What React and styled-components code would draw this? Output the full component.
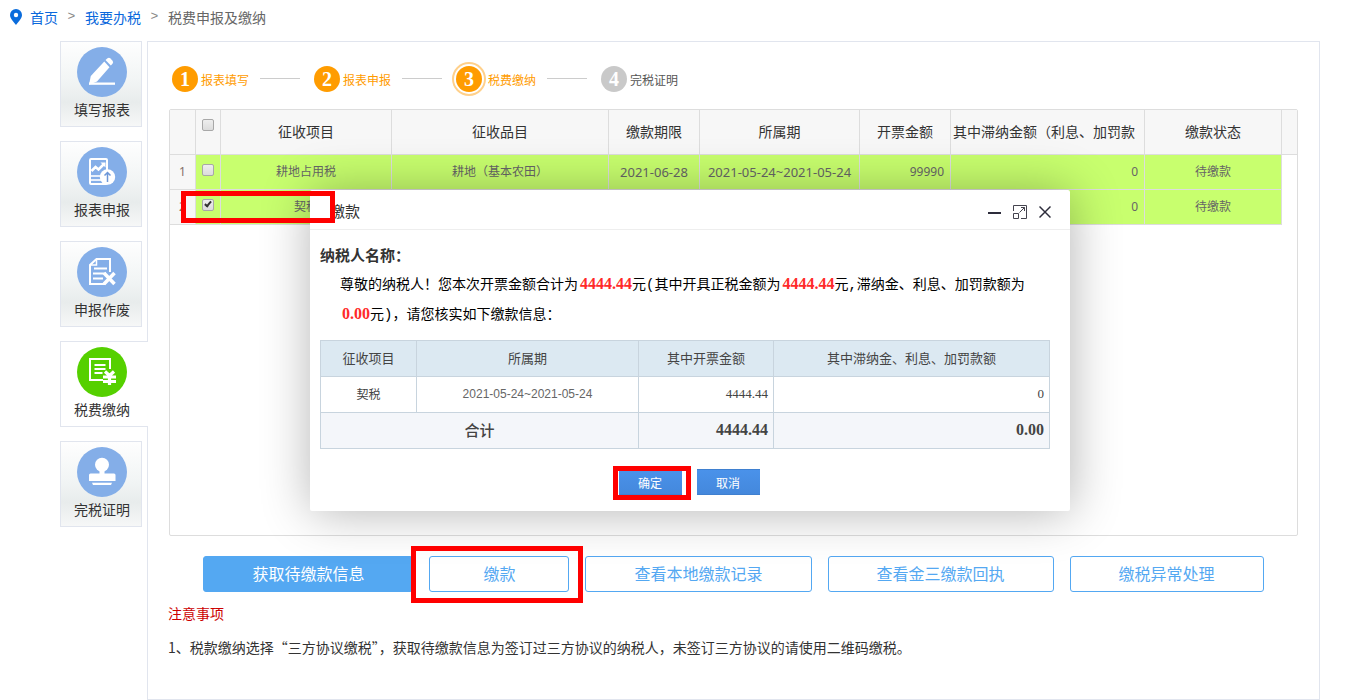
import React, { useState } from 'react';
import styled, { createGlobalStyle, css } from 'styled-components';

const GlobalStyle = createGlobalStyle`
  * {
    box-sizing: border-box;
  }

  body {
    margin: 0;
    background: #fff;
    color: #333;
    font-family: "Noto Sans CJK SC", sans-serif;
    font-size: 14px;
  }

  button, input {
    font-family: inherit;
  }
`;

const navItems = [
  { label: '填写报表', icon: 'edit' },
  { label: '报表申报', icon: 'report' },
  { label: '申报作废', icon: 'cancel' },
  { label: '税费缴纳', icon: 'pay', active: true },
  { label: '完税证明', icon: 'stamp' },
];

const steps = [
  { label: '报表填写', done: true },
  { label: '报表申报', done: true },
  { label: '税费缴纳', done: true, current: true },
  { label: '完税证明' },
];

const initialRows = [
  {
    item: '耕地占用税',
    category: '耕地（基本农田）',
    deadline: '2021-06-28',
    period: '2021-05-24~2021-05-24',
    amount: '99990',
    late: '0',
    status: '待缴款',
    checked: false,
  },
  {
    item: '契税',
    category: '',
    deadline: '',
    period: '',
    amount: '',
    late: '0',
    status: '待缴款',
    checked: true,
  },
];

const NavIcon = ({ name }) => (
  <svg width="50" height="50" viewBox="0 0 50 50" fill="none" aria-hidden="true">
    <circle cx="25" cy="25" r="25" fill={name === 'pay' ? '#55d000' : '#84aee8'} />
    {name === 'edit' && (
      <g fill="#fff">
        <path d="M28.500 13l2-1.800q1.500-1.200 3 .3l2 2.200q1.300 1.500 0 3l-1.700 1.800z" />
        <path d="M27.300 14.500l5.200 5.700L20 34.500l-8 3.200 1.800-8.700z" />
        <path d="M12 35.500h26v2.300H12z" />
      </g>
    )}
    {name === 'report' && (
      <g>
        <rect x="13" y="12" width="17" height="25" rx="1" stroke="#fff" strokeWidth="2" />
        <path d="M14.500 24l4-4 3 2.500 5-5" stroke="#fff" strokeWidth="2.500" />
        <path d="M23.500 15.500h5v5z" fill="#fff" />
        <path d="M14 29h10M14 33h10" stroke="#fff" strokeWidth="2" opacity="0.8" />
        <circle cx="30.500" cy="30" r="7.700" fill="#fff" />
        <path d="M30.500 35v-9M27.500 28.500l3-3 3 3" stroke="#6d97d8" strokeWidth="1.500" />
      </g>
    )}
    {name === 'cancel' && (
      <g stroke="#fff" strokeWidth="2">
        <path d="M33 25V12H19.500L13 18v19h15" />
        <path d="M19.500 12v6H13" strokeWidth="1.500" />
        <path d="M17 21.500h13M16 26.500h13M16 31.500h10" />
        <path d="M27 26l10.500 11M37.500 26L27 37" strokeWidth="3.500" />
      </g>
    )}
    {name === 'pay' && (
      <g stroke="#fff" strokeWidth="2">
        <path d="M33 22V12H13v21h13" />
        <path d="M17.500 18h11M17.500 22h11M17.500 26h8" />
        <path d="M28 24.500l4.500 4 4.500-4M32.500 28v10M26 30h13M26 34.500h13" strokeWidth="3.200" />
      </g>
    )}
    {name === 'stamp' && (
      <g fill="#fff">
        <circle cx="25" cy="17.700" r="7" />
        <path d="M22.500 22h5v4.500h9.500q1.500 0 1.500 1.500v6h-26.500v-6q0-1.500 1.500-1.500h9z" />
        <path d="M15 35.700h20l-1 2.300H16z" />
      </g>
    )}
  </svg>
);

const TaxDialog = () => (
  <Dialog role="dialog" aria-labelledby="dialog-title">
    <DialogHeader>
      <DialogTitle id="dialog-title">缴款</DialogTitle>
      <WindowButton aria-label="最小化">
        <svg width="13" height="14" viewBox="0 0 13 14">
          <path d="M0 7h13v2H0z" fill="#2d2c3b" />
        </svg>
      </WindowButton>
      <WindowButton aria-label="最大化">
        <svg width="14" height="14" viewBox="0 0 14 14" fill="none" stroke="#45444f">
          <path d="M.5 6V.5h13v13H8M.5 8.500h5v5h-5zM6.500 7.500l5-5M8 2.500h3.500V6" />
        </svg>
      </WindowButton>
      <WindowButton aria-label="关闭">
        <svg width="12" height="14" viewBox="0 0 12 14" fill="none" stroke="#2d2c3b">
          <path d="M.5 1.500l11 11M11.500 1.500l-11 11" strokeWidth="1.500" />
        </svg>
      </WindowButton>
    </DialogHeader>
    <DialogBody>
      <TaxpayerName>纳税人名称：</TaxpayerName>
      <Message>
        尊敬的纳税人！您本次开票金额合计为<Amount>4444.44</Amount>元(其中开具正税金额为
        <Amount>4444.44</Amount>元,滞纳金、利息、加罚款额为
        <Amount>0.00</Amount>元)，请您核实如下缴款信息：
      </Message>
      <SummaryTable>
        <colgroup>
          <col style={{ width: 96 }} />
          <col style={{ width: 222 }} />
          <col style={{ width: 135 }} />
          <col />
        </colgroup>
        <thead>
          <tr>
            <th>征收项目</th>
            <th>所属期</th>
            <th>其中开票金额</th>
            <th>其中滞纳金、利息、加罚款额</th>
          </tr>
        </thead>
        <tbody>
          <tr>
            <td>契税</td>
            <PeriodCell>2021-05-24~2021-05-24</PeriodCell>
            <MoneyCell>4444.44</MoneyCell>
            <MoneyCell>0</MoneyCell>
          </tr>
        </tbody>
        <tfoot>
          <tr>
            <TotalLabel colSpan={2}>合计</TotalLabel>
            <MoneyCell $total>4444.44</MoneyCell>
            <MoneyCell $total>0.00</MoneyCell>
          </tr>
        </tfoot>
      </SummaryTable>
      <DialogActions>
        <Marked>
          <DialogButton>确定</DialogButton>
          <ConfirmMark />
        </Marked>
        <DialogButton>取消</DialogButton>
      </DialogActions>
    </DialogBody>
  </Dialog>
);

const App = () => {
  const [rows, setRows] = useState(initialRows);

  const toggle = (index) => {
    setRows(rows.map((row, i) => (i === index ? { ...row, checked: !row.checked } : row)));
  };

  const toggleAll = (e) => {
    setRows(rows.map((row) => ({ ...row, checked: e.target.checked })));
  };

  return (
    <Page>
      <GlobalStyle />
      <Breadcrumb>
        <svg width="12" height="16" viewBox="0 0 12 16" aria-hidden="true">
          <path
            d="M6 0a6 6 0 0 0-6 6c0 3.500 3.500 6.500 6 10 2.500-3.500 6-6.500 6-10a6 6 0 0 0-6-6z"
            fill="#0a6cdc"
          />
          <circle cx="6" cy="6" r="2.200" fill="#fff" />
        </svg>
        <CrumbLink href="#home">首页</CrumbLink>
        <Separator>&gt;</Separator>
        <CrumbLink href="#tax">我要办税</CrumbLink>
        <Separator>&gt;</Separator>
        <span>税费申报及缴纳</span>
      </Breadcrumb>

      <Main>
        <SideNav>
          {navItems.map((item) => (
            <NavItem key={item.label} href={`#${item.icon}`} $active={item.active}>
              <NavIcon name={item.icon} />
              <span>{item.label}</span>
            </NavItem>
          ))}
        </SideNav>

        <Panel>
          <Steps>
            {steps.map((step, i) => (
              <Step key={step.label} $done={step.done}>
                <StepNumber $done={step.done} $current={step.current}>{i + 1}</StepNumber>
                {step.label}
              </Step>
            ))}
          </Steps>

          <GridBox>
            <GridTable>
              <colgroup>
                <col style={{ width: 26 }} />
                <col style={{ width: 25 }} />
                <col style={{ width: 171 }} />
                <col />
                <col style={{ width: 91 }} />
                <col style={{ width: 160 }} />
                <col style={{ width: 91 }} />
                <col style={{ width: 194 }} />
                <col style={{ width: 137 }} />
                <col style={{ width: 15 }} />
              </colgroup>
              <thead>
                <tr>
                  <HeadCell />
                  <HeadCell $top>
                    <Checkbox
                      type="checkbox"
                      aria-label="全选"
                      checked={rows.every((row) => row.checked)}
                      onChange={toggleAll}
                    />
                  </HeadCell>
                  <HeadCell>征收项目</HeadCell>
                  <HeadCell>征收品目</HeadCell>
                  <HeadCell>缴款期限</HeadCell>
                  <HeadCell>所属期</HeadCell>
                  <HeadCell>开票金额</HeadCell>
                  <HeadCell $clip>其中滞纳金额（利息、加罚款</HeadCell>
                  <HeadCell>缴款状态</HeadCell>
                  <HeadCell $last />
                </tr>
              </thead>
              <tbody>
                {rows.map((row, i) => (
                  <tr key={row.item}>
                    <IndexCell>{i + 1}</IndexCell>
                    <Cell $top>
                      <Checkbox
                        type="checkbox"
                        aria-label={row.item}
                        checked={row.checked}
                        onChange={() => toggle(i)}
                      />
                    </Cell>
                    <Cell>{row.item}</Cell>
                    <Cell>{row.category}</Cell>
                    <Cell $date>{row.deadline}</Cell>
                    <Cell $date>{row.period}</Cell>
                    <Cell $right>{row.amount}</Cell>
                    <Cell $right>{row.late}</Cell>
                    <Cell>{row.status}</Cell>
                    <td />
                  </tr>
                ))}
              </tbody>
            </GridTable>
            <RowMark />
          </GridBox>

          <Actions>
            <ActionButton $primary>获取待缴款信息</ActionButton>
            <Marked>
              <ActionButton>缴款</ActionButton>
              <PayMark />
            </Marked>
            <ActionButton>查看本地缴款记录</ActionButton>
            <ActionButton>查看金三缴款回执</ActionButton>
            <ActionButton>缴税异常处理</ActionButton>
          </Actions>

          <NoteTitle>注意事项</NoteTitle>
          <Note>
            1、税款缴纳选择“三方协议缴税”，获取待缴款信息为签订过三方协议的纳税人，未签订三方协议的请使用二维码缴税。
          </Note>
        </Panel>
      </Main>

      <TaxDialog />
    </Page>
  );
};

const Page = styled.div`
  position: relative;
  min-height: 100vh;
  min-width: 1200px;
  display: flex;
  flex-direction: column;
`;

const Breadcrumb = styled.nav`
  display: flex;
  align-items: center;
  height: 33px;
  margin-bottom: 8px;
  padding-left: 10px;
  color: #666;

  svg {
    margin-right: 8px;
  }
`;

const CrumbLink = styled.a`
  color: #0a68dc;
  text-decoration: none;
`;

const Separator = styled.span`
  width: 27px;
  text-align: center;
  font-family: "Liberation Mono", monospace;
  font-size: 13px;
  color: #888;
`;

const Main = styled.div`
  flex: 1;
  display: flex;
  padding: 0 43px 0 60px;
`;

const SideNav = styled.nav`
  flex: none;
  width: 87px;
  display: flex;
  flex-direction: column;
  gap: 14px;
`;

const NavItem = styled.a`
  width: 82px;
  height: 86px;
  padding: 5px 0 0 2px;
  display: flex;
  flex-direction: column;
  align-items: center;
  border: 1px solid #e1e5ee;
  background: linear-gradient(#fefefe 0%, #f2f5f5 45%, #e8ecec 72%, #f6f7f7 100%);
  color: #333;
  line-height: 24px;
  text-decoration: none;

  svg {
    flex: none;
  }

  /* The open tab runs over the left border of the panel */
  ${({ $active }) => $active && css`
    width: 88px;
    padding-right: 7px;
    position: relative;
    z-index: 1;
    border-right: 0;
    background: #fff;
  `}
`;

const Panel = styled.main`
  flex: 1;
  min-width: 0;
  padding: 0 20px;
  border: 1px solid #e1e5ee;
`;

const Steps = styled.ol`
  display: flex;
  align-items: center;
  height: 67px;
  margin: 0;
  padding: 7px 0 0 4px;
  list-style: none;
`;

const Step = styled.li`
  display: flex;
  align-items: center;
  font-size: 12px;
  color: ${({ $done }) => ($done ? '#ff9c00' : '#555')};

  &:not(:last-child)::after {
    content: "";
    width: 40px;
    height: 1px;
    margin: 0 14px 2px 11px;
    background: #ccc;
  }
`;

const StepNumber = styled.span`
  width: 26px;
  height: 26px;
  margin-right: ${({ $current }) => ($current ? '6px' : '3px')};
  border-radius: 50%;
  background: ${({ $done }) => ($done ? '#ff9c00' : '#c9c9c9')};
  box-shadow: ${({ $current }) => ($current ? '0 0 0 2px #fff, 0 0 0 4px #ffd08a' : 'none')};
  color: #fff;
  font: bold 20px/26px "Liberation Serif", serif;
  text-align: center;
`;

const GridBox = styled.div`
  position: relative;
  min-height: 427px;
  margin: 0 1px;
  border: 1px solid #ddd;
  border-radius: 2px;
`;

const GridTable = styled.table`
  width: 100%;
  table-layout: fixed;
  border-collapse: separate;
  border-spacing: 0;
`;

const HeadCell = styled.th`
  height: 45px;
  padding: ${({ $top }) => ($top ? '9px 0 0' : '0 0 2px')};
  vertical-align: ${({ $top }) => ($top ? 'top' : 'middle')};
  border-right: ${({ $last }) => ($last ? '0' : '1px solid #ddd')};
  border-bottom: 1px solid #ddd;
  background: #f7f7f7;
  font-weight: normal;
  line-height: 20px;
  white-space: nowrap;

  ${({ $clip }) => $clip && css`
    padding-left: 2px;
    overflow: hidden;
    text-align: left;
  `}
`;

const Cell = styled.td`
  height: 35px;
  padding: ${({ $top }) => ($top ? '9px 0 0' : '0 6px')};
  vertical-align: ${({ $top }) => ($top ? 'top' : 'middle')};
  border-right: 1px solid #ddd;
  border-bottom: 1px solid #ddd;
  background: #c8ff6e;
  color: #666;
  font-family: "Noto Sans", "Noto Sans CJK SC", sans-serif;
  font-size: ${({ $date }) => ($date ? '13px' : '12px')};
  line-height: 18px;
  text-align: ${({ $right }) => ($right ? 'right' : 'center')};
  white-space: nowrap;
`;

const IndexCell = styled(Cell)`
  background: #f7f7f7;
  color: #85706a;
`;

const Checkbox = styled.input`
  appearance: none;
  position: relative;
  display: block;
  width: 12px;
  height: 12px;
  margin: 0 auto;
  border: 1px solid #a8a8a8;
  border-radius: 2px;
  background: linear-gradient(#eee, #dcdcdc);

  &:checked::after {
    content: "";
    position: absolute;
    left: 3px;
    top: 0;
    width: 2px;
    height: 5px;
    border: solid #333;
    border-width: 0 2px 2px 0;
    transform: rotate(40deg);
  }
`;

const Mark = styled.span`
  position: absolute;
  z-index: 3;
  border: 5px solid #f00;
  pointer-events: none;
`;

const RowMark = styled(Mark)`
  left: 11px;
  top: 81px;
  width: 154px;
  height: 32px;
`;

const PayMark = styled(Mark)`
  inset: -10px -14px -11px -18px;
`;

const ConfirmMark = styled(Mark)`
  inset: -3px -9px -5px -6px;
`;

const Marked = styled.div`
  position: relative;
`;

const Actions = styled.div`
  display: flex;
  justify-content: center;
  gap: 16px;
  margin-top: 20px;
`;

const ActionButton = styled.button`
  min-width: 140px;
  height: 36px;
  padding: 0 48px 2px;
  border: 1px solid #54a8f2;
  border-radius: 3px;
  background: ${({ $primary }) => ($primary ? '#54a8f2' : '#fff')};
  color: ${({ $primary }) => ($primary ? '#fff' : '#54a8f2')};
  font-size: 16px;
  white-space: nowrap;
  cursor: pointer;
`;

const NoteTitle = styled.h2`
  margin: 11px 0 0;
  color: #c00;
  font-size: 14px;
  font-weight: normal;
  line-height: 20px;
`;

const Note = styled.p`
  margin: 14px 0 0;
  line-height: 20px;
`;

const Dialog = styled.section`
  position: absolute;
  left: 310px;
  top: 190px;
  z-index: 2;
  width: 760px;
  border-radius: 2px;
  background: #fff;
  box-shadow: 1px 1px 50px rgba(0, 0, 0, 0.3);
`;

const DialogHeader = styled.header`
  display: flex;
  align-items: center;
  gap: 12px;
  height: 40px;
  padding: 4px 19px 0 20px;
  border-bottom: 1px solid #eee;
`;

const DialogTitle = styled.h1`
  flex: 1;
  margin: 0;
  padding-bottom: 2px;
  font-size: 15px;
  font-weight: normal;
  line-height: 20px;
`;

const WindowButton = styled.button`
  display: flex;
  padding: 0;
  border: 0;
  background: none;
  cursor: pointer;
`;

const DialogBody = styled.div`
  padding: 10px 20px 16px 10px;
`;

const TaxpayerName = styled.h2`
  margin: 0;
  font-size: 15px;
  line-height: 30px;
`;

const Message = styled.p`
  margin: 0 0 10px 20px;
  color: #000;
  font-family: "Liberation Mono", "Noto Sans CJK SC", monospace;
  line-height: 30px;
`;

const Amount = styled.strong`
  padding-left: 2px;
  color: #ff2a2a;
  font-family: "Liberation Serif", serif;
  font-size: 16px;
  line-height: 20px;
`;

const SummaryTable = styled.table`
  width: 100%;
  table-layout: fixed;
  border-collapse: collapse;
  color: #444;
  font-size: 12px;
  text-align: center;

  th, td {
    height: 36px;
    padding: 0 5px 2px;
    border: 1px solid #c8d4de;
    line-height: 20px;
  }

  th {
    background: #dce9f2;
    font-size: 13px;
    font-weight: normal;
  }

  tfoot td {
    background: #f4f6fa;
  }
`;

const PeriodCell = styled.td`
  color: #666;
  font-family: "Liberation Sans", sans-serif;
`;

const MoneyCell = styled.td`
  font-family: "Liberation Serif", serif;
  font-size: ${({ $total }) => ($total ? '16px' : '13px')};
  font-weight: ${({ $total }) => ($total ? 'bold' : 'normal')};
  text-align: right;
`;

const TotalLabel = styled.td`
  font-size: 15px;
  font-weight: 500;
`;

const DialogActions = styled.div`
  display: flex;
  justify-content: center;
  gap: 15px;
  margin: 20px 0 0 8px;
`;

const DialogButton = styled.button`
  display: block;
  width: 63px;
  height: 26px;
  padding: 0;
  border: 1px solid #3f80d0;
  border-width: 1px 0;
  background: linear-gradient(#4a92ea, #4488dc);
  color: #fff;
  font-size: 12px;
  cursor: pointer;
`;

export default App;
